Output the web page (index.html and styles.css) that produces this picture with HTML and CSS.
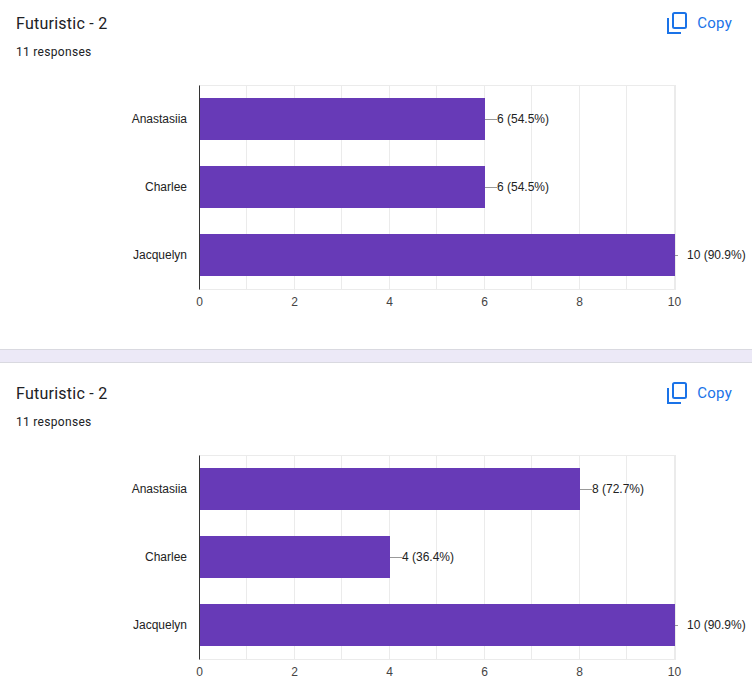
FILE: index.html
```html
<!DOCTYPE html>
<html>
<head>
<meta charset="utf-8">
<link rel="stylesheet" href="styles.css">
</head>
<body>
<div class="page">
  <section class="card">
    <header class="card-head">
      <div class="titles">
        <h2 class="title">Futuristic - 2</h2>
        <div class="count">11 responses</div>
      </div>
      <button class="copy">
        <svg class="copy-icon" width="20" height="22" viewBox="0 0 20 22"><rect x="6" y="1" width="13" height="15" rx="1.5" fill="none" stroke="#1a73e8" stroke-width="2"/><path d="M1 6V21H14" fill="none" stroke="#1a73e8" stroke-width="2"/></svg>
        <span>Copy</span>
      </button>
    </header>
    <div class="chart">
      <div class="labels">
        <div class="cat">Anastasiia</div>
        <div class="cat">Charlee</div>
        <div class="cat last">Jacquelyn</div>
      </div>
      <div class="plot">
        <div class="row"><div class="bar" style="width:60%"></div><span class="lead"></span><span class="val">6 (54.5%)</span></div>
        <div class="row"><div class="bar" style="width:60%"></div><span class="lead"></span><span class="val">6 (54.5%)</span></div>
        <div class="row last max"><div class="bar" style="width:100%"></div><span class="lead"></span><span class="val">10 (90.9%)</span></div>
      </div>
    </div>
    <div class="axis"><span>0</span><span>2</span><span>4</span><span>6</span><span>8</span><span>10</span></div>
  </section>
  <div class="sep"></div>
  <section class="card">
    <header class="card-head">
      <div class="titles">
        <h2 class="title">Futuristic - 2</h2>
        <div class="count">11 responses</div>
      </div>
      <button class="copy">
        <svg class="copy-icon" width="20" height="22" viewBox="0 0 20 22"><rect x="6" y="1" width="13" height="15" rx="1.5" fill="none" stroke="#1a73e8" stroke-width="2"/><path d="M1 6V21H14" fill="none" stroke="#1a73e8" stroke-width="2"/></svg>
        <span>Copy</span>
      </button>
    </header>
    <div class="chart">
      <div class="labels">
        <div class="cat">Anastasiia</div>
        <div class="cat">Charlee</div>
        <div class="cat last">Jacquelyn</div>
      </div>
      <div class="plot">
        <div class="row"><div class="bar" style="width:80%"></div><span class="lead"></span><span class="val">8 (72.7%)</span></div>
        <div class="row"><div class="bar" style="width:40%"></div><span class="lead"></span><span class="val">4 (36.4%)</span></div>
        <div class="row last max"><div class="bar" style="width:100%"></div><span class="lead"></span><span class="val">10 (90.9%)</span></div>
      </div>
    </div>
    <div class="axis"><span>0</span><span>2</span><span>4</span><span>6</span><span>8</span><span>10</span></div>
  </section>
</div>
</body>
</html>
```
FILE: styles.css
```css
html, body {
  margin: 0;
  padding: 0;
  background: #ffffff;
}
.page {
  margin-top: -7px;
  font-family: Roboto, "Liberation Sans", Arial, sans-serif;
  color: #202124;
}
.card {
  padding: 19px 20px 40px 16px;
  background: #fff;
}
.card-head {
  display: flex;
  justify-content: space-between;
  align-items: flex-start;
}
.title {
  margin: 0;
  font-size: 16px;
  line-height: 24px;
  font-weight: 400;
  letter-spacing: 0.25px;
  color: #202124;
}
.count {
  margin-top: 8px;
  font-size: 12px;
  line-height: 16px;
  letter-spacing: 0.3px;
  color: #202124;
}
.copy {
  display: flex;
  align-items: center;
  gap: 10px;
  border: 0;
  background: none;
  padding: 0;
  margin: 0;
  font-family: Roboto, "Liberation Sans", Arial, sans-serif;
  font-size: 15px;
  line-height: 22px;
  letter-spacing: 0.25px;
  color: #1a73e8;
  cursor: pointer;
}
.copy-icon {
  display: block;
}
.chart {
  margin-top: 25px;
  display: flex;
  font-family: "Liberation Sans", Arial, sans-serif;
  font-size: 12px;
  color: #222;
}
.labels {
  width: 171px;
  padding: 1px 12px 1px 0;
  flex-shrink: 0;
}
.cat {
  height: 42px;
  padding: 12px 0 14px;
  display: flex;
  align-items: center;
  justify-content: flex-end;
}
.cat.last {
  padding-bottom: 13px;
}
.plot {
  width: 475px;
  flex-shrink: 0;
  border: 1px solid #ebebeb;
  border-left-color: #333;
  background-image: repeating-linear-gradient(to right, transparent 0, transparent 46.5px, #ebebeb 46.5px, #ebebeb 47.5px);
}
.row {
  height: 42px;
  padding: 12px 0 14px;
  display: flex;
  align-items: center;
}
.row.last {
  padding-bottom: 13px;
}
.bar {
  height: 42px;
  background: #673ab7;
  flex-shrink: 0;
}
.lead {
  width: 12px;
  height: 1px;
  background: #999;
  flex-shrink: 0;
}
.row.max .lead {
  width: 3px;
  margin-right: 9px;
}
.val {
  white-space: nowrap;
  flex-shrink: 0;
  line-height: 14px;
  color: #222;
}
.axis {
  margin: 5px 0 0 136px;
  display: grid;
  grid-template-columns: repeat(6, 95px);
  font-family: "Liberation Sans", Arial, sans-serif;
  font-size: 12px;
  line-height: 14px;
  color: #444;
  text-align: center;
}
.sep {
  height: 12px;
  background: #ece9f7;
  border-top: 1px solid #d9d9e0;
  border-bottom: 1px solid #d9d9e0;
}
```
